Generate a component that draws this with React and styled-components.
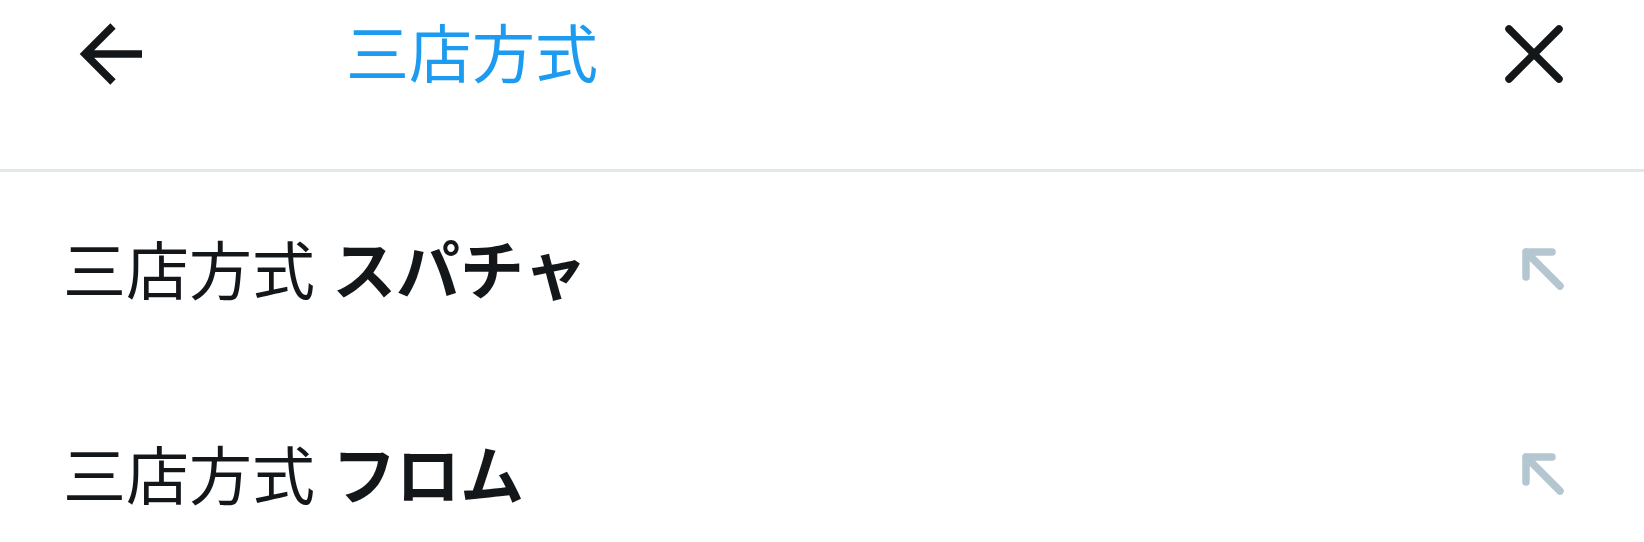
import React from "react";
import styled, { createGlobalStyle } from "styled-components";

const Global = createGlobalStyle`
  html, body { margin: 0; padding: 0; background: #ffffff; }
  body { font-family: "Noto Sans CJK JP", "Noto Sans", sans-serif; }
`;

const Page = styled.div`
  width: 1644px;
  height: 542px;
  overflow: hidden;
  background: #ffffff;
`;

const Header = styled.header`
  height: 169px;
  border-bottom: 3px solid #e1e8e8;
  box-sizing: content-box;
`;

const Toolbar = styled.div`
  height: 107px;
  display: flex;
  align-items: center;
  padding: 0 70px 0 72px;
`;

const IconButton = styled.button`
  flex: none;
  width: ${(p) => p.$size}px;
  height: ${(p) => p.$size}px;
  padding: 0;
  border: 0;
  background: transparent;
  display: flex;
  align-items: center;
  justify-content: center;
  color: ${(p) => p.$color || "#14171a"};
`;

const Query = styled.div`
  flex: 1;
  margin-left: 194px;
  margin-top: -7px;
  font-size: 63px;
  line-height: 80px;
  color: #1d9bf0;
  white-space: nowrap;
`;

const List = styled.ul`
  list-style: none;
  margin: 0;
  padding: 0;
`;

const Row = styled.li`
  height: 205px;
  box-sizing: border-box;
  padding: 54px 70px 0 63px;
  display: flex;
  align-items: flex-start;
`;

const RowText = styled.div`
  flex: 1;
  height: 80px;
  font-size: 63px;
  line-height: 80px;
  color: #14171a;
  white-space: nowrap;
`;

const Typed = styled.span`
  font-weight: 400;
`;

const Completion = styled.span`
  font-weight: 700;
  font-size: 64px;
  margin-left: 3px;
`;

const FillSlot = styled.div`
  flex: none;
  height: 80px;
  padding-top: 3px;
  box-sizing: border-box;
  display: flex;
  align-items: center;
`;

const BackIcon = () => (
  <svg width="80" height="80" viewBox="0 0 80 80" fill="none">
    <path
      d="M41 12 L13 40 L41 68 M13 40 H70"
      stroke="currentColor"
      strokeWidth="7.5"
      strokeLinejoin="miter"
      strokeLinecap="butt"
    />
  </svg>
);

const CloseIcon = () => (
  <svg width="80" height="80" viewBox="0 0 80 80" fill="none">
    <path
      d="M15 15 L65 65 M65 15 L15 65"
      stroke="currentColor"
      strokeWidth="7.5"
      strokeLinecap="round"
    />
  </svg>
);

const FillIcon = () => (
  <svg width="60" height="60" viewBox="0 0 60 60" fill="none">
    <path
      d="M12 39 V14 H38 M12 14 L46 48"
      stroke="currentColor"
      strokeWidth="7.5"
      strokeLinecap="round"
      strokeLinejoin="round"
    />
  </svg>
);

const suggestions = [
  { typed: "三店方式", rest: "スパチャ" },
  { typed: "三店方式", rest: "フロム" },
];

export default function App() {
  return (
    <Page>
      <Global />
      <Header>
        <Toolbar>
          <IconButton $size={80} aria-label="戻る">
            <BackIcon />
          </IconButton>
          <Query>三店方式</Query>
          <IconButton $size={80} aria-label="クリア">
            <CloseIcon />
          </IconButton>
        </Toolbar>
      </Header>
      <List>
        {suggestions.map((s, i) => (
          <Row key={i}>
            <RowText>
              <Typed>{s.typed}</Typed> <Completion>{s.rest}</Completion>
            </RowText>
            <FillSlot>
              <IconButton $size={60} $color="#b4c6d0" aria-label="入力">
                <FillIcon />
              </IconButton>
            </FillSlot>
          </Row>
        ))}
      </List>
    </Page>
  );
}
